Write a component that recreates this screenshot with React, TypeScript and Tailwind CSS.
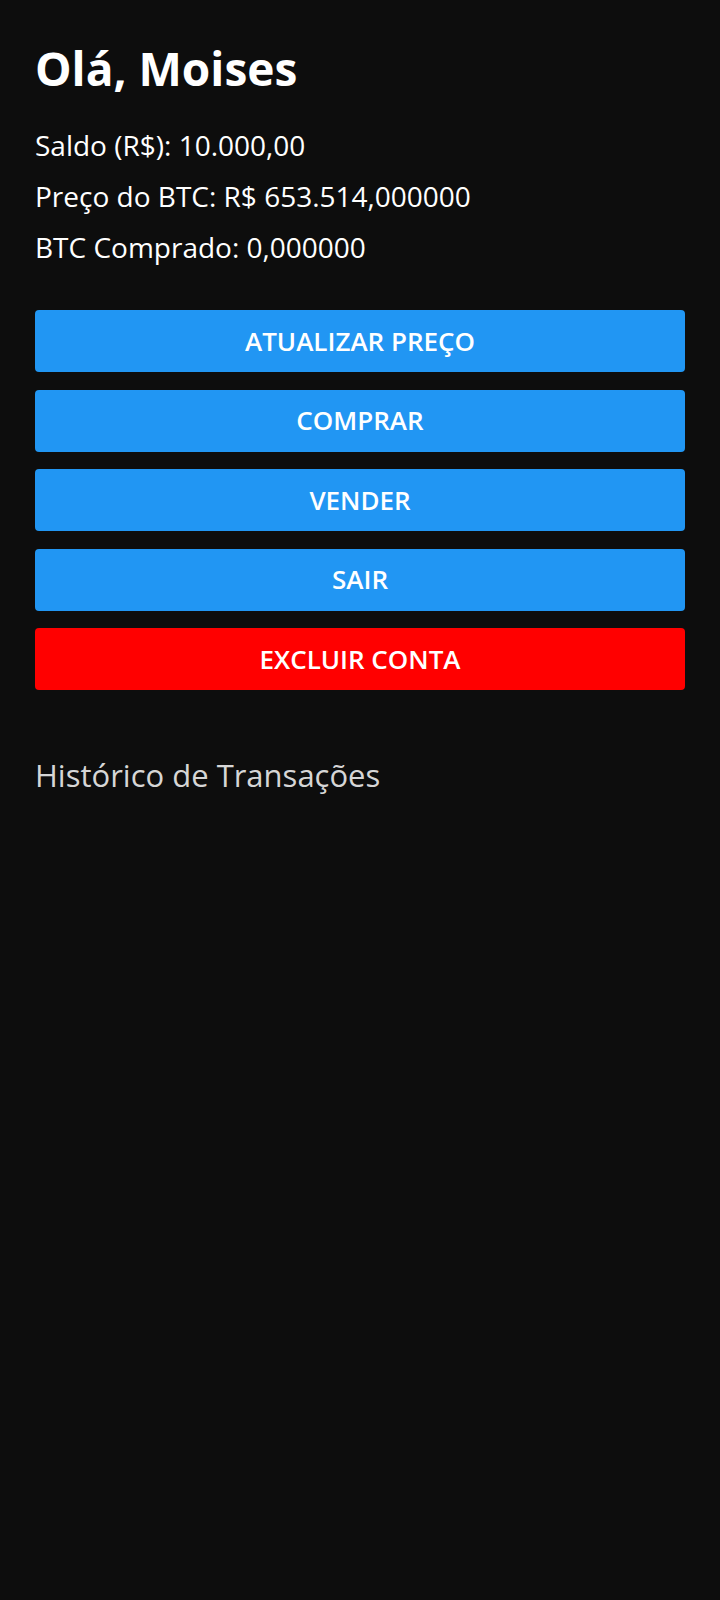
import React from 'react';

const buttons = [
    { label: 'ATUALIZAR PREÇO', color: 'bg-[#2196f3]' },
    { label: 'COMPRAR', color: 'bg-[#2196f3]' },
    { label: 'VENDER', color: 'bg-[#2196f3]' },
    { label: 'SAIR', color: 'bg-[#2196f3]' },
    { label: 'EXCLUIR CONTA', color: 'bg-[#ff0000]' },
];

const App: React.FC = () => {
    return (
        <div className="min-h-[1600px] w-full bg-[#0d0d0d] px-[35px] pt-[42px] font-['Open_Sans',sans-serif] text-white">
            <h1 className="text-[46px] font-bold leading-[52px]">Olá, Moises</h1>

            <div className="mt-[26px] flex flex-col text-[28px] leading-[51px]">
                <p>Saldo (R$): 10.000,00</p>
                <p>Preço do BTC: R$ 653.514,000000</p>
                <p>BTC Comprado: 0,000000</p>
            </div>

            <div className="mt-[37px] flex flex-col gap-[17.5px]">
                {buttons.map((b) => (
                    <button
                        key={b.label}
                        className={`flex h-[62px] w-full items-center justify-center rounded-[4px] text-[26px] font-semibold ${b.color}`}
                    >
                        {b.label}
                    </button>
                ))}
            </div>

            <h2 className="mt-[65px] text-[31px] font-medium leading-[40px] text-[#d6d6d6]">Histórico de Transações</h2>
        </div>
    );
};

export default App;
